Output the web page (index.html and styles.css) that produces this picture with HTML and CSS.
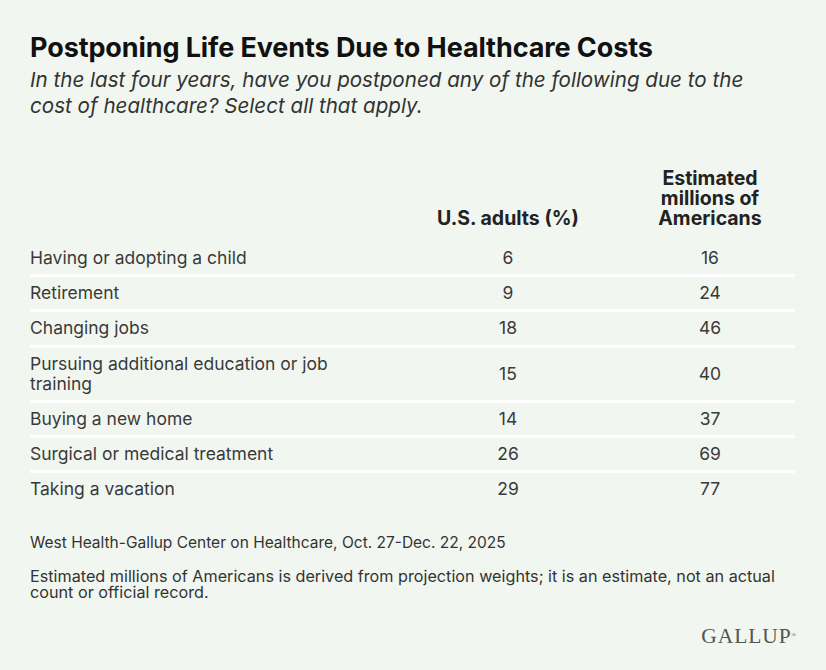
FILE: index.html
```html
<!DOCTYPE html>
<html lang="en">
<head>
<meta charset="utf-8">
<title>Postponing Life Events Due to Healthcare Costs</title>
<link rel="stylesheet" href="styles.css">
</head>
<body>
<main class="card">
  <h1 class="title">Postponing Life Events Due to Healthcare Costs</h1>
  <p class="subtitle">In the last four years, have you postponed any of the following due to the cost of healthcare? Select all that apply.</p>

  <div class="table">
    <div class="row head">
      <div class="cell label"></div>
      <div class="cell num">U.S. adults (%)</div>
      <div class="cell num">Estimated millions of Americans</div>
    </div>
    <div class="row">
      <div class="cell label">Having or adopting a child</div>
      <div class="cell num">6</div>
      <div class="cell num">16</div>
    </div>
    <div class="row">
      <div class="cell label">Retirement</div>
      <div class="cell num">9</div>
      <div class="cell num">24</div>
    </div>
    <div class="row">
      <div class="cell label">Changing jobs</div>
      <div class="cell num">18</div>
      <div class="cell num">46</div>
    </div>
    <div class="row">
      <div class="cell label">Pursuing additional education or job training</div>
      <div class="cell num">15</div>
      <div class="cell num">40</div>
    </div>
    <div class="row">
      <div class="cell label">Buying a new home</div>
      <div class="cell num">14</div>
      <div class="cell num">37</div>
    </div>
    <div class="row">
      <div class="cell label">Surgical or medical treatment</div>
      <div class="cell num">26</div>
      <div class="cell num">69</div>
    </div>
    <div class="row last">
      <div class="cell label">Taking a vacation</div>
      <div class="cell num">29</div>
      <div class="cell num">77</div>
    </div>
  </div>

  <p class="source">West Health-Gallup Center on Healthcare, Oct. 27-Dec. 22, 2025</p>
  <p class="note">Estimated millions of Americans is derived from projection weights; it is an estimate, not an actual count or official record.</p>

  <div class="logo-row">
    <span class="logo">GALLUP<sup class="reg">®</sup></span>
  </div>
</main>
</body>
</html>
```

FILE: styles.css
```css
* { box-sizing: border-box; }

html, body {
  margin: 0;
  padding: 0;
  background: #f1f7f0;
}

body {
  font-family: Inter, "Noto Sans", "Liberation Sans", sans-serif;
  color: #3a3a3a;
}

.card {
  width: 826px;
  height: 670px;
  padding: 32px 31px 0 30px;
  display: flex;
  flex-direction: column;
}

.title {
  margin: 0;
  font-size: 27px;
  font-weight: 700;
  line-height: 31px;
  color: #111;
  letter-spacing: -0.1px;
}

.subtitle {
  margin: 4px 0 0;
  font-size: 20.6px;
  font-style: italic;
  line-height: 26px;
  color: #333;
  width: 730px;
}

.table {
  margin-top: 49px;
  display: flex;
  flex-direction: column;
}

.row {
  display: grid;
  grid-template-columns: 361px 234px 170px;
  align-items: center;
  border-bottom: 3px solid #ffffff;
  padding: 6px 0 6.2px;
  font-size: 17.5px;
  line-height: 20px;
}

.row.head {
  border-bottom: none;
  align-items: end;
  padding: 0 0 14px;
  font-size: 19.5px;
  font-weight: 700;
  color: #222;
}

.row.last { border-bottom: none; }

.label {
  max-width: 320px;
}

.num {
  text-align: center;
}

.head .num:last-child {
  padding: 0 20px;
}

.source {
  margin: 29px 0 0;
  font-size: 15.5px;
  line-height: 18px;
  color: #333;
}

.note {
  margin: 16px 0 0;
  font-size: 16.2px;
  line-height: 16px;
  color: #333;
  max-width: 760px;
}

.logo-row {
  margin-top: auto;
  margin-right: -2px;
  display: flex;
  justify-content: flex-end;
  padding-bottom: 24px;
}

.logo {
  font-family: "Liberation Serif", "Times New Roman", serif;
  font-size: 21.5px;
  line-height: 20px;
  color: #555;
  letter-spacing: 0.9px;
}

.reg {
  font-size: 6px;
  vertical-align: top;
  position: relative;
  top: -1px;
  margin-left: 0;
}
```
